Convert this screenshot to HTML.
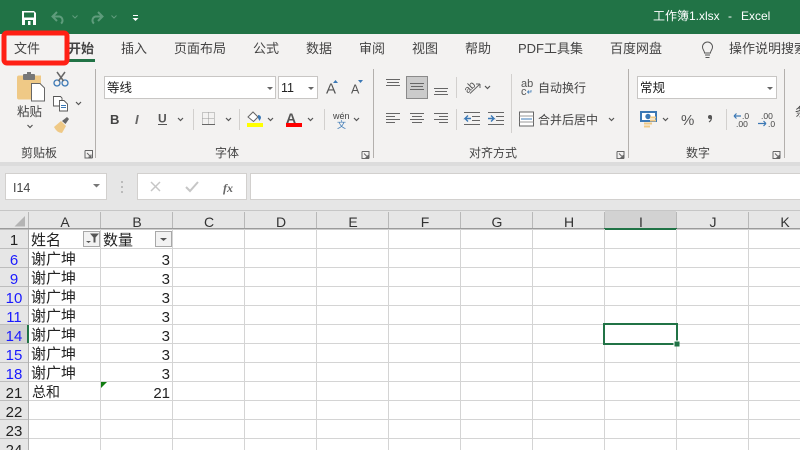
<!DOCTYPE html>
<html lang="zh"><head><meta charset="utf-8"><style>
html,body{margin:0;padding:0;width:800px;height:450px;overflow:hidden;background:#fff}
svg{display:block}
text{font-family:"Liberation Sans","Noto Sans CJK SC",sans-serif;fill:#444}
.t{font-size:13px;fill:#444}
.g{font-size:12px;fill:#444}
.c{font-size:15px;fill:#222}
.h{font-size:14px;fill:#333;text-anchor:middle}
.r{font-size:15px;fill:#1a1aff;text-anchor:middle}
.k{font-size:15px;fill:#222;text-anchor:middle}
.n{font-size:15px;fill:#222;text-anchor:end}
.l{stroke:#666;stroke-width:1;fill:none}
.v{stroke:#555;stroke-width:1.2;fill:none}
.sep{stroke:#d2d0ce;stroke-width:1}
.gs{stroke:#b3b0ad;stroke-width:1}
.gl{stroke:#d4d4d4;stroke-width:1}
</style></head><body>
<svg width="800" height="450" viewBox="0 0 800 450" xmlns="http://www.w3.org/2000/svg">
<rect width="800" height="450" fill="#fff"/>
<rect width="800" height="34" fill="#217346"/>
<rect y="34" width="800" height="128" fill="#f3f2f1"/>
<rect y="162" width="800" height="4" fill="#dcdcdc"/>
<rect y="166" width="800" height="45" fill="#e6e6e6"/>

<!-- QAT -->
<path d="M22 11h12l2 2v12h-14z" fill="#fff"/>
<rect x="24" y="12.500" width="10" height="5" fill="#217346"/>
<rect x="25" y="20" width="8" height="5" fill="#217346"/><rect x="28" y="21" width="2.500" height="4" fill="#fff"/>
<g fill="none" stroke="#5f9c7c" stroke-width="2">
<path d="M57 12l-4.500 4.500 4.500 4.500"/><path d="M52.500 16.500h7a4 4 0 0 1 1.500 7"/>
<path d="M98 12l4.500 4.500-4.500 4.500"/><path d="M102.500 16.500h-7a4 4 0 0 0-1.500 7"/>
</g>
<path d="M72.500 15.500l2.500 2.500 2.500-2.500M111.500 15.500l2.500 2.500 2.500-2.500" fill="none" stroke="#5f9c7c"/>
<rect x="133" y="15" width="5" height="1" fill="#fff"/><path d="M132.500 18h6l-3 3z" fill="#fff"/>
<text x="653" y="20" style="font-size:12px;fill:#fff">工作簿1.xlsx</text>
<text x="728" y="20" style="font-size:12px;fill:#fff">-</text>
<text x="741" y="20" style="font-size:12px;fill:#fff">Excel</text>

<!-- Tabs -->
<text class="t" x="14" y="53">文件</text>
<text class="t" x="68" y="53" style="font-weight:700">开始</text>
<rect x="68" y="59" width="27" height="3" fill="#217346"/>
<text class="t" x="121" y="53">插入</text>
<text class="t" x="174" y="53">页面布局</text>
<text class="t" x="253" y="53">公式</text>
<text class="t" x="306" y="53">数据</text>
<text class="t" x="359" y="53">审阅</text>
<text class="t" x="412" y="53">视图</text>
<text class="t" x="465" y="53">帮助</text>
<text class="t" x="518" y="53">PDF工具集</text>
<text class="t" x="610" y="53">百度网盘</text>
<path d="M704.500 53c0-2.500-2-3-2-6a5 5 0 0 1 10 0c0 3-2 3.500-2 6z" fill="none" stroke="#555"/>
<path d="M705 55h5M705.500 57.500h4" stroke="#555"/>
<text class="t" x="729" y="53">操作说明搜索</text>

<rect x="4" y="33" width="63" height="30" rx="3" fill="none" stroke="#ff2015" stroke-width="5"/>

<!-- Clipboard -->
<path d="M19 75.500q-2 0-2 2v20q0 2 2 2h22v-24z" fill="#efc986"/>
<rect x="23" y="74" width="12" height="6" rx="1" fill="#777"/><rect x="27" y="72" width="4" height="3" fill="#777"/>
<path d="M31.500 83.500h8.500l4.500 4.500v13h-13z" fill="#fff" stroke="#666"/>
<text x="17" y="116" style="font-size:12.500px;fill:#444">粘贴</text>
<path d="M27.500 125l2.500 2.500 2.500-2.500" class="v"/>
<g fill="none" stroke="#3b78b5" stroke-width="1.300"><circle cx="57" cy="83" r="3"/><circle cx="65" cy="83" r="3"/></g>
<path d="M57 72l6.500 9M65 72l-6.500 9" stroke="#666" stroke-width="1.500"/>
<path d="M53.500 96.500h7l1.500 1.500v8h-8.500z" fill="#fff" stroke="#555" stroke-width=".9"/>
<path d="M59.500 100.500h4.500l3.500 3.500v7h-8z" fill="#fff" stroke="#555" stroke-width=".9"/>
<path d="M61 105.500h5M61 107.500h5" stroke="#3b78b5"/>
<path d="M76 102l2.500 2.500 2.500-2.500" class="v"/>
<path d="M54 127l7-6 5 5-4 7q-5 0-8-6z" fill="#efc986"/>
<path d="M62 121l5-4 2 2-3.500 5z" fill="#666"/>
<text class="g" x="21" y="157">剪贴板</text>
<path d="M85 150.500h7.500v7.500M85 150.500v7.500h7.500M87 153l4 4M91 154.500v2.500h-2.500" class="l" stroke-width=".8"/>
<line class="gs" x1="95.500" y1="69" x2="95.500" y2="158"/>

<!-- Font -->
<rect x="104.500" y="76.500" width="171" height="22" fill="#fff" stroke="#c8c6c4"/>
<text x="107" y="92" style="font-size:12.500px;fill:#222">等线</text>
<path d="M267 87h6l-3 3z" fill="#666"/>
<rect x="278.500" y="76.500" width="39" height="22" fill="#fff" stroke="#c8c6c4"/>
<text x="281" y="92" style="font-size:12.500px;fill:#222">11</text>
<path d="M308 87h6l-3 3z" fill="#666"/>
<text x="326" y="93.500" style="font-size:15px;fill:#555">A</text>
<path d="M333 83h5l-2.500-3z" fill="#3b78b5"/>
<text x="351" y="93.500" style="font-size:12.500px;fill:#555">A</text>
<path d="M358 80h5l-2.500 3z" fill="#3b78b5"/>
<text x="110" y="124" style="font-size:13px;font-weight:700;fill:#444">B</text>
<text x="135" y="124" style="font-size:13px;font-style:italic;font-weight:700;fill:#666">I</text>
<text x="158" y="122.500" style="font-size:12px;font-weight:700;fill:#555">U</text>
<rect x="158" y="124" width="9" height="1" fill="#555"/>
<path d="M178 118l2.500 2.500 2.500-2.500M226 118l2.500 2.500 2.500-2.500M268 118l2.500 2.500 2.500-2.500M308 118l2.500 2.500 2.500-2.500M354 118l2.500 2.500 2.500-2.500" class="v"/>
<line class="sep" x1="193.500" y1="109" x2="193.500" y2="130"/>
<path d="M202.500 112.500h12v12h-12zM208.500 112.500v12M202.500 118.500h12" fill="none" stroke="#999" stroke-dasharray="1 1"/>
<rect x="202" y="124" width="13" height="1" fill="#666"/>
<line class="sep" x1="239.500" y1="109" x2="239.500" y2="130"/>
<path d="M248 117l5-5 5 5-4.500 4.500z" fill="#fff" stroke="#666"/>
<path d="M258 115q3 0 3 3l-1.500 3-1.500-3z" fill="#3b78b5"/>
<rect x="247" y="123" width="16" height="4" fill="#ff0"/>
<text x="286" y="123" style="font-size:14px;font-weight:700;fill:#555">A</text>
<rect x="286" y="123" width="16" height="4" fill="#f00"/>
<line class="sep" x1="324.500" y1="109" x2="324.500" y2="130"/>
<text x="333" y="119" style="font-size:9px;fill:#444">wén</text>
<text x="337" y="128" style="font-size:9px;fill:#3b78b5">文</text>
<text x="215" y="157" class="g">字体</text>
<path d="M362 151.500h7v7M362 151.500v7h7M364 153.500l4 4M368 155v2.500h-2.500" class="l" stroke-width=".8"/>
<line class="gs" x1="373.500" y1="69" x2="373.500" y2="158"/>

<!-- Align -->
<path d="M386 79.500h14M387 82.500h12M386 85.500h14" class="l"/>
<rect x="406.500" y="76.500" width="21" height="22" fill="#cbcbcb" stroke="#8a8a8a"/>
<path d="M410 83.500h14M411 86.500h12M410 89.500h14" class="l"/>
<path d="M434 88.500h14M435 91.500h12M434 94.500h14" class="l"/>
<line class="sep" x1="456.500" y1="77" x2="456.500" y2="98"/>
<text x="463" y="90" style="font-size:10.500px;fill:#555" transform="rotate(-45 470 86)">ab</text>
<path d="M470 93.500l10-9.500M480 84h-4M480 84v4" class="l"/>
<path d="M485 86l2.500 2.500 2.500-2.500" class="v"/>
<path d="M386 113.500h14M386 116.500h9M386 119.500h14M386 122.500h9" class="l"/>
<path d="M410 113.500h14M412 116.500h10M410 119.500h14M412 122.500h10" class="l"/>
<path d="M434 113.500h14M439 116.500h9M434 119.500h14M439 122.500h9" class="l"/>
<line class="sep" x1="456.500" y1="109" x2="456.500" y2="130"/>
<path d="M464 112.500h16M472 116.500h8M472 120.500h8M464 124.500h16" class="l"/>
<path d="M471 118.500h-6l3-3M465 118.500l3 3" fill="none" stroke="#3b78b5" stroke-width="1.400"/>
<path d="M488 112.500h16M496 116.500h8M496 120.500h8M488 124.500h16" class="l"/>
<path d="M488 118.500h6l-3-3M494 118.500l-3 3" fill="none" stroke="#3b78b5" stroke-width="1.400"/>
<line class="sep" x1="511.500" y1="74" x2="511.500" y2="133"/>
<text x="521" y="87" style="font-size:11px;fill:#555">ab</text>
<text x="521" y="95" style="font-size:11px;fill:#555">c</text>
<path d="M531 90v2h-3M529 90.500l-1.500 1.500 1.500 1.500" fill="none" stroke="#3b78b5" stroke-width=".8"/>
<text class="g" x="538" y="92">自动换行</text>
<rect x="519.500" y="112" width="14" height="14" fill="#fff" stroke="#666"/>
<path d="M519.500 116h14M519.500 122h14" stroke="#999"/>
<path d="M521 119h11" stroke="#3b78b5"/>
<text class="g" x="538" y="124">合并后居中</text>
<path d="M609 118l2.500 2.500 2.500-2.500" class="v"/>
<text class="g" x="469" y="157">对齐方式</text>
<path d="M617 151.500h7v7M617 151.500v7h7M619 153.500l4 4M623 155v2.500h-2.500" class="l" stroke-width=".8"/>
<line class="gs" x1="628.500" y1="69" x2="628.500" y2="158"/>

<!-- Number -->
<rect x="637.500" y="76.500" width="139" height="22" fill="#fff" stroke="#c8c6c4"/>
<text x="640" y="92" style="font-size:12.500px;fill:#222">常规</text>
<path d="M767 87h6l-3 3z" fill="#666"/>
<rect x="641" y="112" width="15" height="9" fill="#fff" stroke="#3b78b5" stroke-width="2"/>
<circle cx="648" cy="116.500" r="2.700" fill="#3b78b5"/>
<path d="M650 117.500h6M650 120.500h6M644 123.500h8M644 126.500h6" stroke="#efc986" stroke-width="2"/>
<path d="M663 118l2.500 2.500 2.500-2.500" class="v"/>
<text x="681" y="125" style="font-size:15px;fill:#555">%</text>
<circle cx="710" cy="117" r="2" fill="#555"/><path d="M711.500 117.500q0 3-2.500 4.500" fill="none" stroke="#555" stroke-width="1.200"/>
<line class="sep" x1="726.500" y1="109" x2="726.500" y2="130"/>
<text x="742" y="119" style="font-size:8.500px;fill:#444">.0</text>
<text x="736" y="127" style="font-size:8.500px;fill:#444">.00</text>
<path d="M734 116h7M734 116l2.500-2.500M734 116l2.500 2.500" fill="none" stroke="#3b78b5" stroke-width="1.200"/>
<text x="761" y="119" style="font-size:8.500px;fill:#444">.00</text>
<text x="768" y="127" style="font-size:8.500px;fill:#444">.0</text>
<path d="M758 123.500h8M766 123.500l-2.500-2.500M766 123.500l-2.500 2.500" fill="none" stroke="#3b78b5" stroke-width="1.200"/>
<text class="g" x="686" y="157">数字</text>
<path d="M773 151.500h7v7M773 151.500v7h7M775 153.500l4 4M779 155v2.500h-2.500" class="l" stroke-width=".8"/>
<line class="gs" x1="784.500" y1="69" x2="784.500" y2="158"/>
<text class="g" x="795" y="116">条</text>

<!-- Formula bar -->
<rect x="5.500" y="173.500" width="101" height="26" fill="#fff" stroke="#d2d0ce"/>
<text x="13" y="192" style="font-size:12.500px;fill:#444">I14</text>
<path d="M93 184h7l-3.500 3.500z" fill="#777"/>
<path d="M121 181h2v2h-2zM121 186h2v2h-2zM121 191h2v2h-2z" fill="#bbb"/>
<rect x="137.500" y="173.500" width="109" height="26" fill="#fff" stroke="#d2d0ce"/>
<path d="M151 182l9 9M160 182l-9 9" stroke="#c6c6c6" stroke-width="1.500"/>
<path d="M186 187l4 4 8-9" fill="none" stroke="#c6c6c6" stroke-width="2"/>
<text x="223" y="192" style="font-size:12px;font-family:'Liberation Serif',serif;font-style:italic;font-weight:700;fill:#666">fx</text>
<rect x="250.500" y="173.500" width="560" height="26" fill="#fff" stroke="#d2d0ce"/>

<!-- Headers -->
<rect x="0" y="211" width="800" height="18" fill="#e6e6e6"/>
<rect x="0" y="229" width="28" height="221" fill="#e6e6e6"/>
<rect x="0" y="210" width="800" height="1" fill="#c6c6c6"/>
<path d="M25 216v10.500h-10.500z" fill="#b4b4b4"/>
<rect x="605" y="211" width="71" height="17" fill="#d2d2d2"/>
<rect x="0" y="325" width="28" height="18" fill="#d2d2d2"/>
<rect x="0" y="228" width="800" height="1.500" fill="#9b9b9b"/>
<rect x="28" y="229" width="1" height="221" fill="#b0b0b0"/>
<rect x="604" y="228" width="73" height="2" fill="#217346"/>
<rect x="27" y="325" width="2" height="18" fill="#217346"/>

<!-- Column dividers -->
<g stroke="#b8b8b8"><path d="M28.500 212v16M100.500 212v16M172.500 212v16M244.500 212v16M316.500 212v16M388.500 212v16M460.500 212v16M532.500 212v16M604.500 212v16M676.500 212v16M748.500 212v16"/></g>
<g class="gl"><path class="gl" d="M100.500 229v221M172.500 229v221M244.500 229v221M316.500 229v221M388.500 229v221M460.500 229v221M532.500 229v221M604.500 229v221M676.500 229v221M748.500 229v221"/>
<path class="gl" d="M29 248.500h771M29 267.500h771M29 286.500h771M29 305.500h771M29 324.500h771M29 343.500h771M29 362.500h771M29 381.500h771M29 400.500h771M29 419.500h771M29 438.500h771"/></g>
<g stroke="#bdbdbd"><path d="M0 248.500h28M0 267.500h28M0 286.500h28M0 305.500h28M0 324.500h28M0 343.500h28M0 362.500h28M0 381.500h28M0 400.500h28M0 419.500h28M0 438.500h28"/></g>

<text class="h" x="65" y="227">A</text>
<text class="h" x="137" y="227">B</text>
<text class="h" x="209" y="227">C</text>
<text class="h" x="281" y="227">D</text>
<text class="h" x="353" y="227">E</text>
<text class="h" x="425" y="227">F</text>
<text class="h" x="497" y="227">G</text>
<text class="h" x="569" y="227">H</text>
<text class="h" x="641" y="227">I</text>
<text class="h" x="713" y="227">J</text>
<text class="h" x="785" y="227">K</text>

<text class="k" x="14" y="245">1</text>
<text class="r" x="14" y="265">6</text>
<text class="r" x="14" y="284">9</text>
<text class="r" x="14" y="303">10</text>
<text class="r" x="14" y="322">11</text>
<text class="r" x="14" y="341">14</text>
<text class="r" x="14" y="360">15</text>
<text class="r" x="14" y="379">18</text>
<text class="k" x="14" y="398">21</text>
<text class="k" x="14" y="417">22</text>
<text class="k" x="14" y="436">23</text>
<text class="k" x="14" y="455">24</text>

<!-- Cells -->
<text class="c" x="31" y="245">姓名</text>
<text class="c" x="103" y="245">数量</text>
<rect x="83.500" y="231.500" width="16" height="15" fill="#f2f2f2" stroke="#a8a8a8"/>
<path d="M86 241h5l-2.500 2z" fill="#555"/>
<path d="M90 233.500h9l-3.500 4v5h-2v-5z" fill="#555"/>
<rect x="155.500" y="231.500" width="16" height="15" fill="#f2f2f2" stroke="#a8a8a8"/>
<path d="M160 238h7l-3.500 3z" fill="#555"/>

<text class="c" x="31" y="264">谢广坤</text><text class="n" x="170" y="265">3</text>
<text class="c" x="31" y="283">谢广坤</text><text class="n" x="170" y="284">3</text>
<text class="c" x="31" y="302">谢广坤</text><text class="n" x="170" y="303">3</text>
<text class="c" x="31" y="321">谢广坤</text><text class="n" x="170" y="322">3</text>
<text class="c" x="31" y="340">谢广坤</text><text class="n" x="170" y="341">3</text>
<text class="c" x="31" y="359">谢广坤</text><text class="n" x="170" y="360">3</text>
<text class="c" x="31" y="378">谢广坤</text><text class="n" x="170" y="379">3</text>
<text class="c" x="32" y="397" style="font-size:14px">总和</text><text class="n" x="170" y="398">21</text>
<path d="M101 382h6l-6 6z" fill="#107c10"/>

<!-- Selection -->
<rect x="604" y="324" width="73" height="20" fill="none" stroke="#217346" stroke-width="2"/>
<rect x="673.500" y="340.500" width="6" height="6" fill="#fff"/>
<rect x="674.500" y="341.500" width="5" height="5" fill="#217346"/>
</svg>
</body></html>
